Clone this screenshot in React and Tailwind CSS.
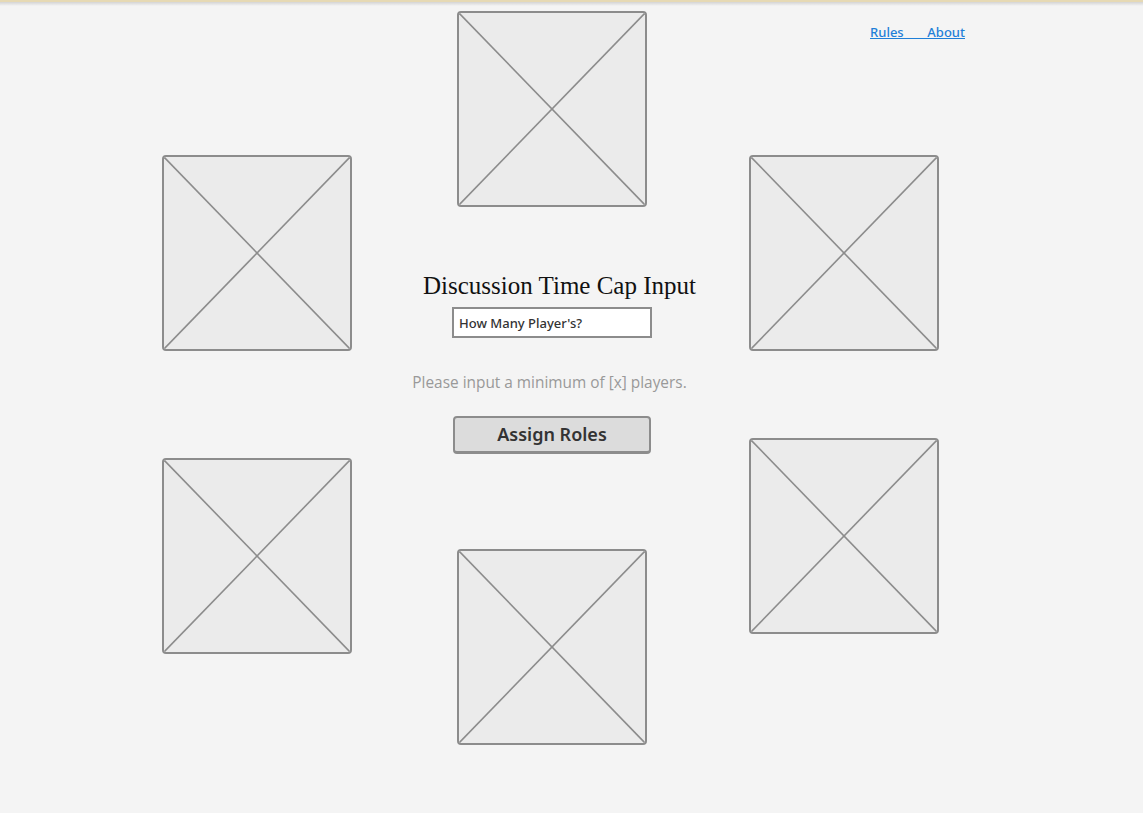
import React from 'react';

function Placeholder({ className = '' }) {
    return (
        <div className={`relative w-[190px] h-[196px] shrink-0 rounded-[4px] border-2 border-[#8c8c8c] bg-[#ebebeb] overflow-hidden ${className}`}>
            <svg className="absolute inset-0 w-full h-full" viewBox="0 0 186 192" preserveAspectRatio="none">
                <line x1="0" y1="0" x2="186" y2="192" stroke="#8c8c8c" strokeWidth="1.6" />
                <line x1="186" y1="0" x2="0" y2="192" stroke="#8c8c8c" strokeWidth="1.6" />
            </svg>
        </div>
    );
}

export default function App() {
    return (
        <div className="min-h-screen w-full bg-[#f4f4f4] overflow-hidden" style={{ fontFamily: '"Noto Sans", "Open Sans", sans-serif' }}>
            <div className="h-[2px] bg-[#e6d9b4]" />
            <div className="h-[4px] bg-gradient-to-b from-[#d4d4d4] to-[#f4f4f4]" />
            <div className="flex pl-[162px]">
                {/* left column */}
                <div className="flex flex-col w-[190px] pt-[149px]">
                    <Placeholder />
                    <Placeholder className="mt-[107px]" />
                </div>

                {/* center column */}
                <div className="flex flex-col items-center w-[190px] ml-[105px] pt-[5px]">
                    <Placeholder />
                    <h1 className="mt-[65px] ml-[15px] whitespace-nowrap text-[25px] leading-[28px] text-[#111]" style={{ fontFamily: '"Liberation Serif", serif' }}>
                        Discussion Time Cap Input
                    </h1>
                    <input
                        type="text"
                        defaultValue="How Many Player's?"
                        className="mt-[7px] w-[200px] h-[31px] shrink-0 border-2 border-[#8c8c8c] bg-white px-[5px] text-[13px] font-medium text-[#333] outline-none"
                    />
                    <p className="mt-[35px] mr-[5px] whitespace-nowrap text-[15.4px] leading-[20px] font-medium text-[#999]" style={{ fontFamily: '"Open Sans", "Noto Sans", sans-serif' }}>
                        Please input a minimum of [x] players.
                    </p>
                    <button className="mt-[23px] w-[198px] h-[38px] shrink-0 rounded-[4px] border-2 border-b-[3px] border-[#8c8c8c] bg-[#dcdcdc] text-[18px] font-semibold text-[#333]">
                        Assign Roles
                    </button>
                    <Placeholder className="mt-[95px]" />
                </div>

                {/* right column */}
                <div className="flex flex-col w-[190px] ml-[102px] pt-[18px]">
                    <div className="flex justify-end mr-[-26px] h-[16px]">
                        <a href="#" className="whitespace-pre text-[13px] leading-[16px] font-medium text-[#1f7fd8] underline">
                            {'Rules       About'}
                        </a>
                    </div>
                    <Placeholder className="mt-[115px]" />
                    <Placeholder className="mt-[87px]" />
                </div>
            </div>
        </div>
    );
}
